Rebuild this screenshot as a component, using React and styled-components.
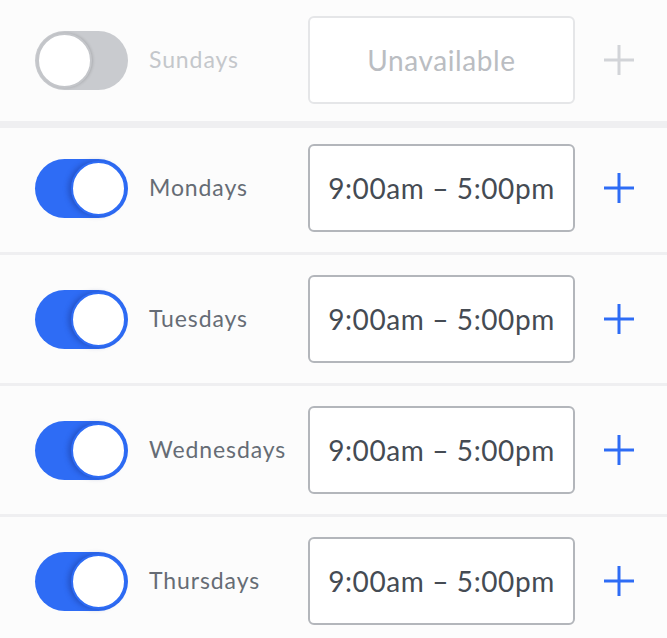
import React from "react";
import styled, { createGlobalStyle } from "styled-components";

const Global = createGlobalStyle`
  html, body { margin: 0; padding: 0; background: #fcfcfc; }
  body { font-family: Lato, "Open Sans", sans-serif; -webkit-font-smoothing: antialiased; }
`;

const List = styled.div`
  width: 667px;
  display: flex;
  flex-direction: column;
`;

const Row = styled.div`
  display: flex;
  align-items: center;
  padding: ${(p) => p.$pad};
  border-bottom: ${(p) => p.$divider}px solid #efeff1;
`;

const Track = styled.div`
  position: relative;
  margin-left: 35px;
  width: 93px;
  height: 59px;
  border-radius: 30px;
  background: ${(p) => (p.$on ? "#2e6cf5" : "#c9cbcf")};
  flex: none;
`;

const Knob = styled.div`
  position: absolute;
  top: 2px;
  ${(p) => (p.$on ? "right: 2px;" : "left: 2px;")}
  width: 51px;
  height: 51px;
  border-radius: 50%;
  background: #fff;
  border: 2px solid ${(p) => (p.$on ? "#2e6cf5" : "#c4c6ca")};
  box-shadow: ${(p) => (p.$on ? "-3px 0 5px rgba(20,40,120,0.35)" : "1px 0 3px rgba(0,0,0,0.15)")};
`;

const Label = styled.div`
  margin-left: 21px;
  margin-top: -3px;
  width: 159px;
  font-size: 23px;
  letter-spacing: 0.9px;
  color: ${(p) => (p.$on ? "#666c75" : "#c4c7cb")};
`;

const TimeBox = styled.div`
  width: 263px;
  height: 84px;
  box-sizing: content-box;
  border: 2px solid ${(p) => (p.$on ? "#b3b6bb" : "#e5e6e8")};
  border-radius: 6px;
  background: #fff;
  display: flex;
  align-items: center;
  justify-content: center;
  font-size: 28px;
  letter-spacing: 0.6px;
  color: ${(p) => (p.$on ? "#454b53" : "#babdc2")};
  flex: none;
`;

const PlusBtn = styled.div`
  margin-left: 29px;
  width: 30px;
  height: 30px;
  display: flex;
  align-items: center;
  justify-content: center;
`;

function Plus({ color }) {
  return (
    <svg width="30" height="30" viewBox="0 0 30 30">
      <path d="M15 1.5v27M1.5 15h27" stroke={color} strokeWidth="3" strokeLinecap="square" />
    </svg>
  );
}

const days = [
  { name: "Sundays", on: false, pad: "16px 0 17px", divider: 7 },
  { name: "Mondays", on: true, pad: "16px 0 20px", divider: 3 },
  { name: "Tuesdays", on: true, pad: "20px 0 20px", divider: 3 },
  { name: "Wednesdays", on: true, pad: "20px 0 20px", divider: 3 },
  { name: "Thursdays", on: true, pad: "20px 0 20px", divider: 0 },
];

export default function App() {
  return (
    <>
      <Global />
      <List>
        {days.map((d) => (
          <Row key={d.name} $pad={d.pad} $divider={d.divider}>
            <Track $on={d.on}>
              <Knob $on={d.on} />
            </Track>
            <Label $on={d.on}>{d.name}</Label>
            <TimeBox $on={d.on}>{d.on ? "9:00am – 5:00pm" : "Unavailable"}</TimeBox>
            <PlusBtn>
              <Plus color={d.on ? "#2e6cf5" : "#d2d4d8"} />
            </PlusBtn>
          </Row>
        ))}
      </List>
    </>
  );
}
